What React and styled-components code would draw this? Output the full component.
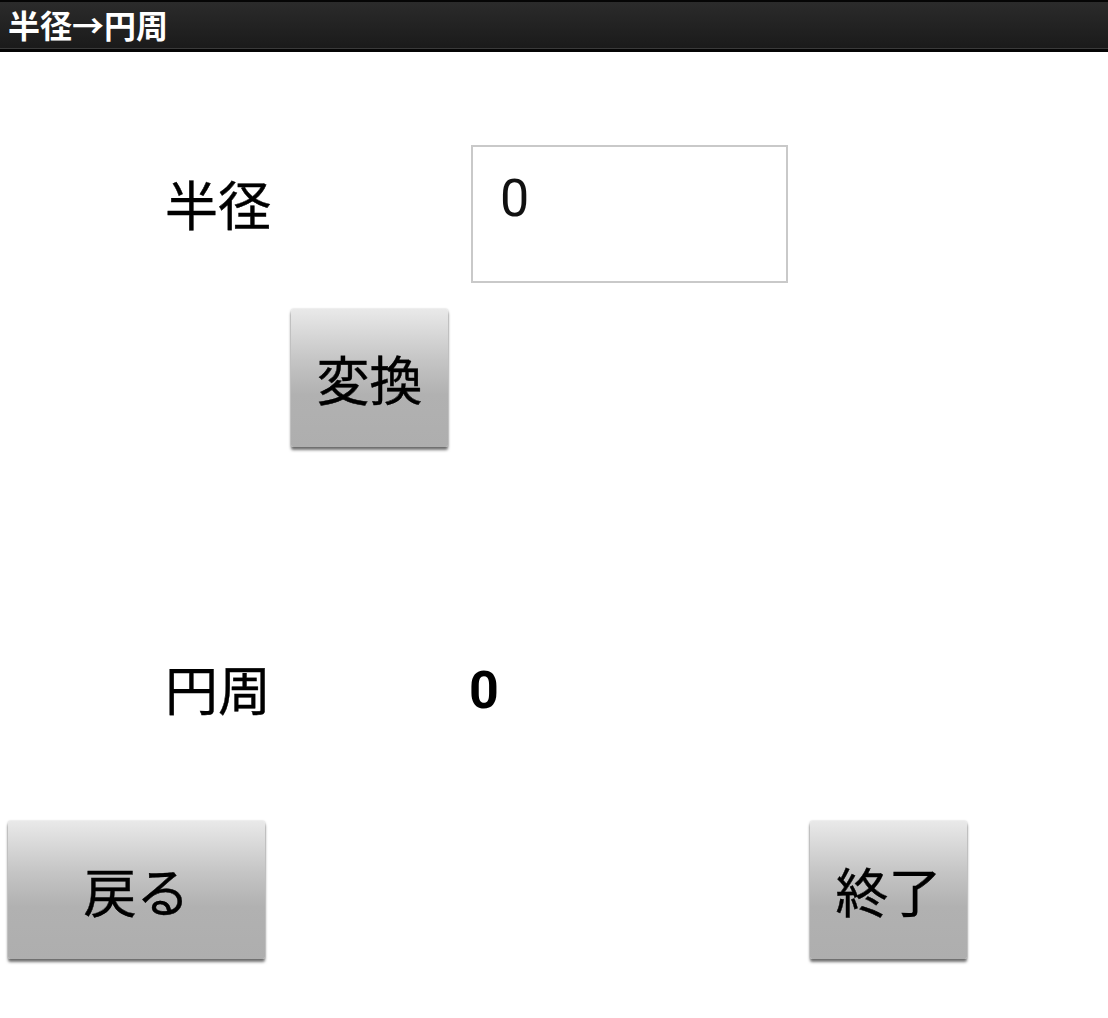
import React from "react";
import styled, { createGlobalStyle } from "styled-components";

const Global = createGlobalStyle`
  html, body { margin: 0; padding: 0; background: #ffffff; }
  body { font-family: "Noto Sans CJK JP", "Noto Sans", sans-serif; }
`;

const Page = styled.div`
  width: 1108px;
  height: 1018px;
  background: #fff;
  display: flex;
  flex-direction: column;
`;

const TitleBar = styled.div`
  height: 52px;
  box-sizing: border-box;
  border-top: 2px solid #050505;
  border-bottom: 3px solid #050505;
  background: linear-gradient(#2b2b2b, #1a1a1a);
  box-shadow: inset 0 -1px 0 #3a3a3a;
  display: flex;
  align-items: center;
  padding-left: 8px;
`;

const Title = styled.span`
  color: #fff;
  font-family: "Noto Sans CJK JP", sans-serif;
  font-weight: 700;
  font-size: 32px;
  line-height: 1;
  margin-top: -3px;
`;

const Row = styled.div`
  display: flex;
  align-items: flex-start;
  padding-left: ${(p) => p.$left}px;
  margin-top: ${(p) => p.$top}px;
`;

const Label = styled.div`
  width: ${(p) => p.$w}px;
  font-size: 53px;
  line-height: 50px;
  color: #000;
  -webkit-text-stroke: 0.4px #000;
  margin-top: ${(p) => p.$mt || 0}px;
`;

const InputBox = styled.div`
  width: 317px;
  height: 138px;
  box-sizing: border-box;
  border: 2px solid #c9c9c9;
  padding: 26px 0 0 27px;
  font-family: Roboto, "Noto Sans", sans-serif;
  font-size: 52px;
  line-height: 52px;
  color: #111;
`;

const Value = styled.div`
  font-family: Roboto, "Noto Sans", sans-serif;
  font-weight: 700;
  font-size: 52px;
  line-height: 50px;
  color: #000;
  margin-top: -1px;
`;

const Button = styled.button`
  width: ${(p) => p.$w}px;
  height: 138px;
  border: none;
  border-radius: 2px;
  padding: 0;
  background: linear-gradient(#e9e9e9 0%, #c4c4c4 38%, #b1b1b1 62%, #aeaeae 100%);
  box-shadow: 0 3px 3px rgba(0, 0, 0, 0.55), 0 0 2px rgba(0, 0, 0, 0.25);
  font-family: "Noto Sans CJK JP", sans-serif;
  font-size: 53px;
  line-height: 1;
  color: #000;
  -webkit-text-stroke: 0.4px #000;
  display: flex;
  align-items: center;
  justify-content: center;
  cursor: pointer;
`;

const BottomRow = styled.div`
  display: flex;
  justify-content: space-between;
  padding: 0 141px 0 8px;
  margin-top: 105px;
`;

export default function App() {
  return (
    <>
      <Global />
      <Page>
        <TitleBar>
          <Title>半径→円周</Title>
        </TitleBar>
        <Row $left={165} $top={93}>
          <Label $w={306} $mt={33}>半径</Label>
          <InputBox>0</InputBox>
        </Row>
        <Row $left={291} $top={26}>
          <Button $w={157}>変換</Button>
        </Row>
        <Row $left={165} $top={220}>
          <Label $w={304} $mt={-4}>円周</Label>
          <Value>0</Value>
        </Row>
        <BottomRow>
          <Button $w={257}>戻る</Button>
          <Button $w={157}>終了</Button>
        </BottomRow>
      </Page>
    </>
  );
}
